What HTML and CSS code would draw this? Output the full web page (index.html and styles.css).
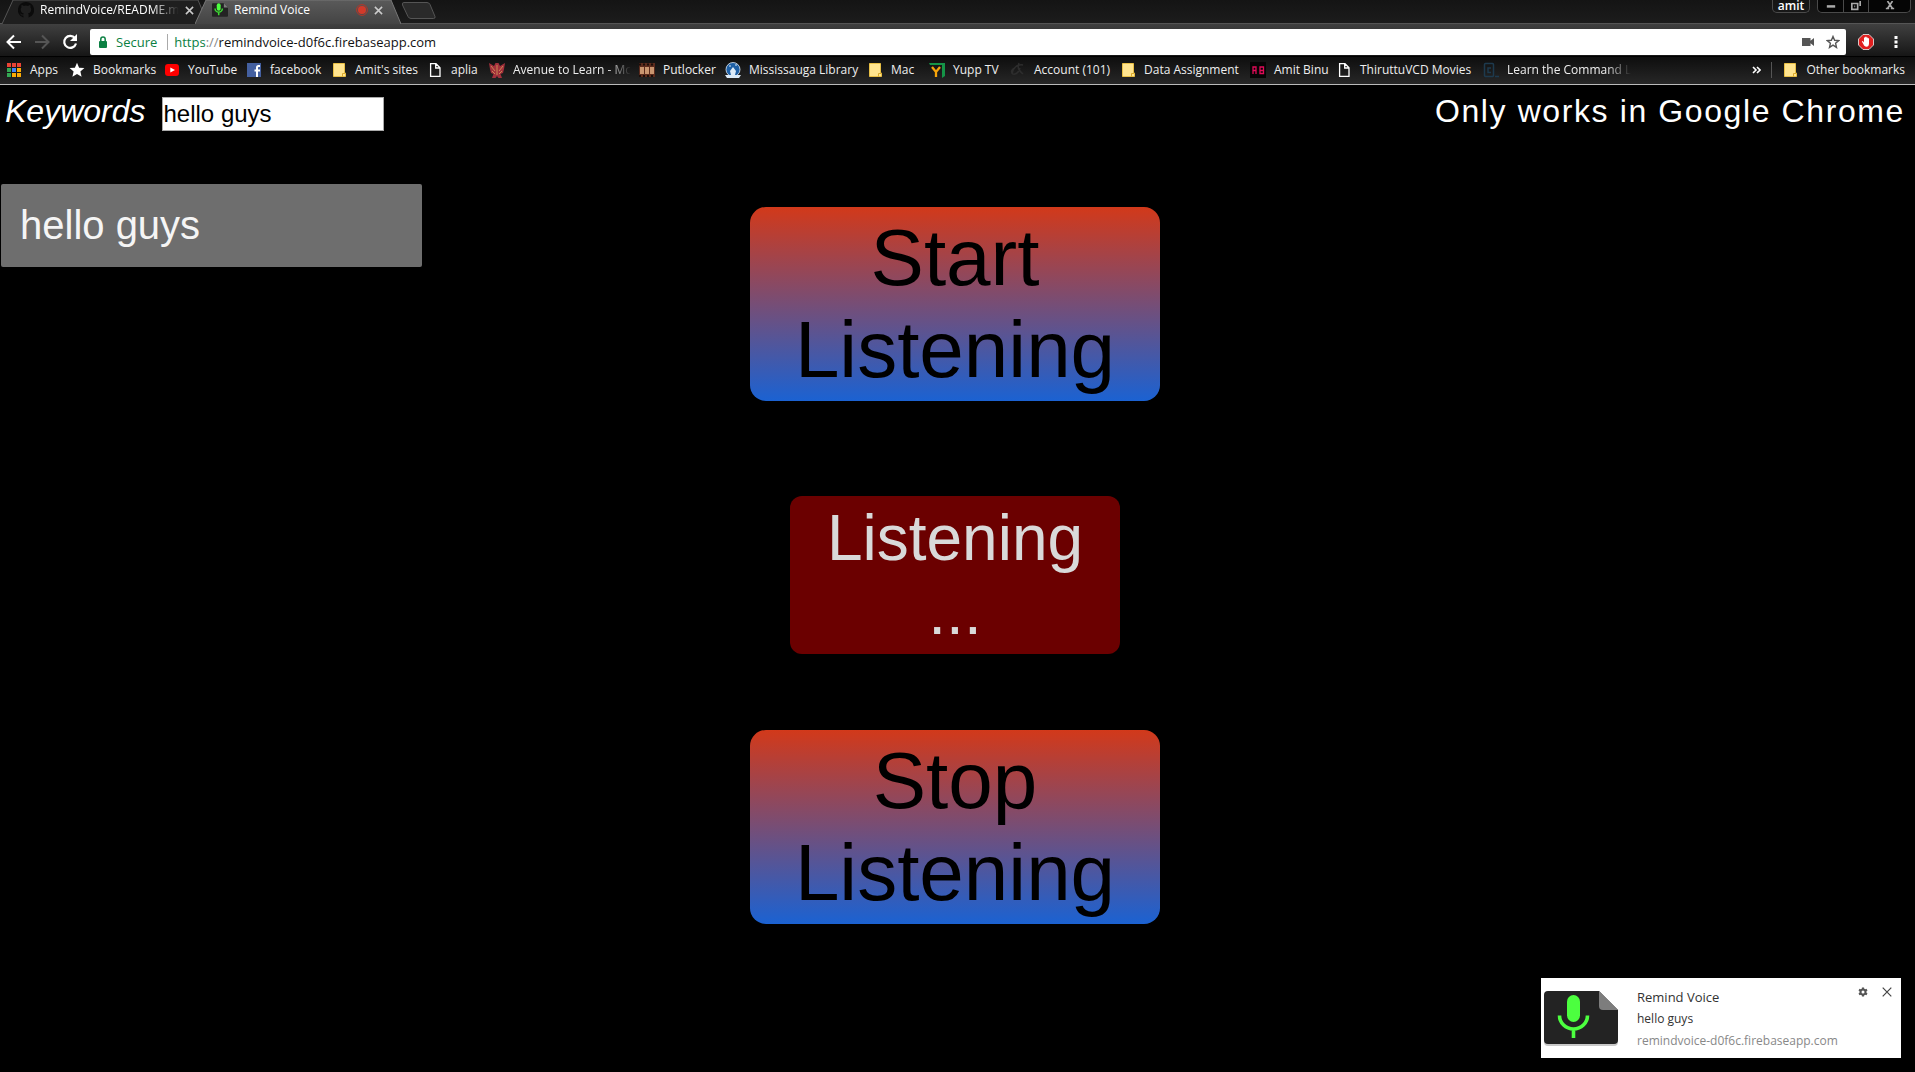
FILE: index.html
```html
<!DOCTYPE html>
<html lang="en">
<head>
<meta charset="utf-8">
<title>Remind Voice</title>
<link rel="stylesheet" href="styles.css">
</head>
<body>
<svg class="defs" aria-hidden="true">
  <symbol id="folder" viewBox="0 0 16 16"><path fill="#ffe48f" stroke="#e8bf45" d="M2.500 1.500h11v9.500h1v3.500h-12z"/><path fill="none" stroke="#d9a92c" d="M11.500 14.500v-3h3"/></symbol>
  <symbol id="file" viewBox="0 0 16 16"><path fill="none" stroke="#fff" stroke-width="1.300" d="M3.600 1.700h5.400l4 4v8.700H3.600zM8.700 1.700v4.300h4.300"/></symbol>
  <symbol id="cross" viewBox="0 0 10 10"><path fill="none" stroke="currentColor" stroke-width="1.700" d="M1 1l8 8M9 1L1 9"/></symbol>
  <symbol id="mic" viewBox="0 0 74 58">
    <path fill="#c8c8c8" d="M2 7h52l20 20v25a4 4 0 0 1-4 4H4a4 4 0 0 1-4-4V7z"/>
    <path fill="#232323" d="M4 1h51l19 19v30a4 4 0 0 1-4 4H4a4 4 0 0 1-4-4V5a4 4 0 0 1 4-4z"/>
    <path fill="#7d7d7d" d="M55 1l19 19H59a4 4 0 0 1-4-4z"/>
    <rect x="23" y="5" width="13" height="27" rx="6.500" fill="#4cff3f"/>
    <path fill="none" stroke="#4cff3f" stroke-width="3.600" d="M15.500 25.500a14 13.500 0 0 0 28 0M29.500 39v9"/>
  </symbol>
</svg>

<header class="browser">
  <div class="tabs">
    <div class="tab">
      <svg class="tab-shape" viewBox="0 0 206 24" preserveAspectRatio="none"><path fill="#1f1f1f" stroke="#555" d="M0 24L11 0H196L206 24"/></svg>
      <svg class="favicon" viewBox="0 0 16 16"><path fill="#0b0b0b" d="M8 0a8 8 0 0 0-2.600 15.600v-2.200c-2.200.5-2.700-1-3.400-2 1.200-.2 1.300 1.500 3.400 1 .1-.6.300-.9.500-1C3.900 11 2.700 10 2.700 7.300c0-.9.300-1.600.8-2.100-.2-.7-.2-1.500.1-2.200.9 0 1.600.5 2.200.9a8 8 0 0 1 4.300 0c.6-.4 1.400-.9 2.200-.9.300.8.300 1.500.1 2.200.5.600.8 1.300.8 2.100 0 2.800-1.300 3.700-3.200 4 .4.400.6.900.6 1.700v2.600A8 8 0 0 0 8 0z"/></svg>
      <span class="tab-title fade">RemindVoice/README.m</span>
      <button class="tab-close" aria-label="Close tab"><svg viewBox="0 0 10 10"><use href="#cross"/></svg></button>
    </div>
    <div class="tab active">
      <svg class="tab-shape" viewBox="0 0 206 24" preserveAspectRatio="none"><path fill="url(#tabfill)" stroke="#777" d="M0 24L11 0H196L206 24"/><defs><linearGradient id="tabfill" x2="0" y2="1"><stop stop-color="#5a5a5a"/><stop offset="1" stop-color="#444"/></linearGradient></defs></svg>
      <svg class="favicon" viewBox="0 0 74 74"><path fill="#232323" d="M4 6h51l19 19v39a4 4 0 0 1-4 4H4a4 4 0 0 1-4-4V10a4 4 0 0 1 4-4z"/><path fill="#7d7d7d" d="M55 6l19 19H55z"/><rect x="22" y="6" width="18" height="34" rx="9" fill="#4cff3f"/><path fill="none" stroke="#3ddc32" stroke-width="7" d="M14 30a17 17 0 0 0 34 0M31 47v14"/></svg>
      <span class="tab-title">Remind Voice</span>
      <svg class="record" viewBox="0 0 12 12"><circle cx="6" cy="6" r="5.400" fill="none" stroke="#b53528" stroke-width="1"/><circle cx="6" cy="6" r="4" fill="#d23a2a"/></svg>
      <button class="tab-close" aria-label="Close tab"><svg viewBox="0 0 10 10"><use href="#cross"/></svg></button>
    </div>
    <button class="new-tab" aria-label="New tab"><svg viewBox="0 0 36 18"><path fill="#2a2a2a" stroke="#555" d="M3 1.500h23q2 0 3 2l5 12q.5 2-1.500 2H10q-2 0-3-2L1.500 4q-.8-2.500 1.500-2.500z"/></svg></button>
    <button class="profile">amit</button>
    <div class="window-buttons">
      <button aria-label="Minimize"><svg viewBox="0 0 12 12"><path fill="#aaa" d="M1 5h10v3H1z"/></svg></button>
      <button aria-label="Restore"><svg viewBox="0 0 12 12"><path fill="none" stroke="#aaa" stroke-width="2" d="M1 3h7v7H1zM4 6.500h1M11 0v6"/></svg></button>
      <button aria-label="Close"><svg viewBox="0 0 12 12"><path fill="none" stroke="#aaa" stroke-width="2" d="M3 0l6 9M9 0L3 9M1 9h4M7 9h4"/></svg></button>
    </div>
  </div>

  <div class="toolbar">
    <button aria-label="Back"><svg viewBox="0 0 16 16"><path fill="none" stroke="#fff" stroke-width="2" d="M15 8H2M8 1.500L1.500 8 8 14.500"/></svg></button>
    <button aria-label="Forward"><svg viewBox="0 0 16 16"><path fill="none" stroke="#555" stroke-width="2" d="M1 8h13M8 1.500L14.500 8 8 14.500"/></svg></button>
    <button aria-label="Reload"><svg viewBox="0 0 16 16"><path fill="none" stroke="#fff" stroke-width="2.200" d="M13 4.200A6 6 0 1 0 14 9.500"/><path fill="#fff" d="M15 0v7H8z"/></svg></button>
    <div class="omnibox">
      <svg class="lock" viewBox="0 0 10 12"><rect x="1" y="5" width="8" height="7" rx="1" fill="#0b8043"/><path fill="none" stroke="#0b8043" stroke-width="1.500" d="M2.800 5V3.200a2.200 2.200 0 0 1 4.400 0V5"/></svg>
      <span class="secure">Secure</span>
      <span class="url"><span class="scheme">https</span><span class="slashes">://</span>remindvoice-d0f6c.firebaseapp.com</span>
      <svg class="camera" viewBox="0 0 14 10"><path fill="#555" d="M1 1h8.500v2.800L13 1v8L9.500 6.200V9H1z"/></svg>
      <button class="star" aria-label="Bookmark this page"><svg viewBox="0 0 14 14"><path fill="none" stroke="#555" stroke-width="1.400" d="M7 1.500l1.600 3.800 4.100.3-3.100 2.700.9 4.100L7 10.200l-3.500 2.200.9-4.100L1.300 5.600l4.100-.3z"/></svg></button>
    </div>
    <button aria-label="Ad blocker"><svg viewBox="0 0 16 16"><path fill="#e01f1f" stroke="#eee" stroke-width=".8" d="M5 .5h6L15.500 5v6L11 15.500H5L.5 11V5z"/><path fill="#fff" d="M5.300 10L3.800 7.500l1-.4L6 8.500V3.600h1.200V2.800h1.300v.7h1.200v.8H11v5.200c0 2-1 3.300-2.500 3.300S6 11.800 5.300 10z"/></svg></button>
    <button class="menu" aria-label="Menu"><svg viewBox="0 0 4 14"><path fill="#fff" d="M.5 1h3v3h-3zM.5 5.500h3v3h-3zM.5 10h3v3h-3z"/></svg></button>
  </div>

  <nav class="bookmarks">
    <a href="#"><svg viewBox="0 0 16 16"><path fill="#ea4335" d="M1 1h4v4H1zM6 1h4v4H6zM11 1h4v4h-4z"/><path fill="#34a853" d="M1 6h4v4H1z"/><path fill="#4285f4" d="M6 6h4v4H6z"/><path fill="#fbab05" d="M11 6h4v4h-4zM6 11h4v4H6zM11 11h4v4h-4z"/><path fill="#34a853" d="M1 11h4v4H1z"/><path stroke="#181818" d="M5.500 0v16M10.500 0v16M0 5.500h16M0 10.500h16"/></svg><span>Apps</span></a>
    <a href="#"><svg viewBox="0 0 16 16"><path fill="#fff" d="M8 .8l2.100 4.900 5.300.4-4 3.500 1.200 5.200L8 12l-4.600 2.800 1.200-5.200-4-3.500 5.300-.4z"/></svg><span>Bookmarks</span></a>
    <a href="#"><svg viewBox="0 0 16 16"><rect x="1" y="2" width="14" height="12" rx="3" fill="#f00"/><path fill="#fff" d="M6.300 5.500L11 8l-4.700 2.500z"/></svg><span>YouTube</span></a>
    <a href="#"><svg viewBox="0 0 16 16"><path fill="#4460a0" d="M1 1h14v14H1z"/><path fill="none" stroke="#fff" stroke-width="2" d="M14 4h-1.500Q11 4 11 5.500V15M8.500 8.500H14"/></svg><span>facebook</span></a>
    <a href="#"><svg viewBox="0 0 16 16"><use href="#folder"/></svg><span>Amit's sites</span></a>
    <a href="#"><svg viewBox="0 0 16 16"><use href="#file"/></svg><span>aplia</span></a>
    <a href="#"><svg viewBox="0 0 16 16"><path fill="#a3303c" d="M0 1l5 3 1.500-3h3L11 4l5-3-1 6-1 4-2.500 1L13 16H9.500L8 14l-1.500 2H3l1.500-4L2 11 1 7z"/><path fill="none" stroke="#c98a52" d="M2 4l4 5M14 4l-4 5M8 3v10M3 9l3 3M13 9l-3 3"/></svg><span class="fade">Avenue to Learn - Mc</span></a>
    <a href="#"><svg viewBox="0 0 16 16"><path fill="#5b2a1c" d="M0 1h16v14H0z"/><path fill="#c9956f" d="M1 5h14v7H1z"/><path stroke="#5b2a1c" d="M5.500 1v11M10.500 1v11"/><path stroke="#1b0d08" stroke-width="2" stroke-dasharray="2 2" d="M0 14h16M0 2.500h16"/></svg><span>Putlocker</span></a>
    <a href="#"><svg viewBox="0 0 16 16"><circle cx="8" cy="7.500" r="7" fill="#1d5fa5" stroke="#dde9f5" stroke-width=".8"/><path fill="#dceaf7" d="M8 5l3 4-1 4H6L5 9zM0 13h16l-2 3H2zM4 4l1-1 1 1-1 1zM10 3l1-1 1 1-1 1z"/></svg><span>Mississauga Library</span></a>
    <a href="#"><svg viewBox="0 0 16 16"><use href="#folder"/></svg><span>Mac</span></a>
    <a href="#"><svg viewBox="0 0 16 16"><path fill="#159447" d="M0 1h16v13l-3 2V3H1z"/><path fill="none" stroke="#f5a30a" stroke-width="2.300" d="M3 5l4 5 4-5M7 9.500V15"/></svg><span>Yupp TV</span></a>
    <a href="#"><svg viewBox="0 0 16 16"><path fill="none" stroke="#2d2d2d" stroke-width="1.500" d="M2 12C3 5 8 2 13 3M9 1c-2 4 0 8 4 11M5 6c-5 2-4 7 0 6s4-4 5-6"/></svg><span>Account (101)</span></a>
    <a href="#"><svg viewBox="0 0 16 16"><use href="#folder"/></svg><span>Data Assignment</span></a>
    <a href="#"><svg viewBox="0 0 16 16"><path fill="#050505" d="M0 0h16v16H0z"/><path fill="none" stroke="#e00b58" stroke-width="1.300" d="M3 12V5h3v7M3 8.500h3M10 5h3.500v6.500H10zM10 8.500h3"/></svg><span>Amit Binu</span></a>
    <a href="#"><svg viewBox="0 0 16 16"><use href="#file"/></svg><span>ThiruttuVCD Movies</span></a>
    <a href="#"><svg viewBox="0 0 16 16"><rect x="1.500" y="1.500" width="9" height="13" rx="1" fill="none" stroke="#1d3a4e" stroke-width="1.500"/><path fill="none" stroke="#1d3a4e" stroke-width="1.500" d="M8 6H5v4.500h3M12 14.500h4"/></svg><span class="fade">Learn the Command L</span></a>
    <button class="more" aria-label="More bookmarks"><svg viewBox="0 0 9 8"><path fill="none" stroke="#fff" stroke-width="1.600" d="M1 1l3 3-3 3M5 1l3 3-3 3"/></svg></button>
    <a class="other" href="#"><svg viewBox="0 0 16 16"><use href="#folder"/></svg><span>Other bookmarks</span></a>
  </nav>
</header>

<main>
  <div class="heading">
    <label for="keywords">Keywords</label>
    <input id="keywords" type="text" value="hello guys">
    <p>Only works in Google Chrome</p>
  </div>
  <div class="content">
    <ul class="keyword-list"><li>hello guys</li></ul>
    <div class="controls">
      <button class="action">Start Listening</button>
      <div class="status" role="status">Listening ...</div>
      <button class="action">Stop Listening</button>
    </div>
  </div>
</main>

<aside class="notification">
  <svg class="app-icon" viewBox="0 0 74 58"><use href="#mic"/></svg>
  <div class="message">
    <h2>Remind Voice</h2>
    <p>hello guys</p>
    <p class="origin">remindvoice-d0f6c.firebaseapp.com</p>
  </div>
  <button aria-label="Settings"><svg viewBox="0 0 12 12"><circle cx="6" cy="6" r="3" fill="none" stroke="#555" stroke-width="2.400"/><path stroke="#555" stroke-width="2.600" d="M6 .5v2M6 9.500v2M1.200 3.200l1.800 1M9 7.800l1.800 1M1.200 8.800l1.800-1M9 4.200l1.800-1"/></svg></button>
  <button aria-label="Dismiss"><svg viewBox="0 0 10 10"><path fill="none" stroke="#444" stroke-width="1.200" d="M.7.700l8.600 8.600M9.300.700L.7 9.300"/></svg></button>
</aside>
</body>
</html>
```
FILE: styles.css
```css
* { box-sizing: border-box; }

body {
  margin: 0;
  min-height: 100vh;
  background: #000;
  color: #fff;
  font-family: "Liberation Sans", Arial, sans-serif;
}

button {
  margin: 0;
  padding: 0;
  border: 0;
  background: none;
  color: inherit;
  font: inherit;
}

svg { display: block; flex: none; }
p, h2, ul { margin: 0; padding: 0; }
.defs { position: absolute; width: 0; height: 0; }

/* Browser frame */
.browser { font: 12px/16px "Open Sans", "Noto Sans", sans-serif; }

.tabs {
  display: flex;
  align-items: flex-start;
  height: 24px;
  padding: 0 4px 0 2px;
  background: linear-gradient(#141414, #1c1c1c);
  border-bottom: 1px solid #555;
}

.tab {
  position: relative;
  display: flex;
  align-items: center;
  gap: 6px;
  width: 206px;
  height: 24px;
  padding: 0 18px 4px 16px;
}
.tab.active { margin-left: -13px; padding-left: 17px; }
.tab-shape { position: absolute; inset: 0; width: 100%; height: 100%; }
.tab > :not(.tab-shape) { position: relative; }
.favicon { width: 16px; height: 16px; }
.tab-title { flex: 1; white-space: nowrap; }
.tab-close svg { width: 9px; height: 9px; color: #ccc; }
.record { width: 12px; height: 12px; }
.new-tab svg { width: 36px; height: 20px; }

.profile {
  width: 38px;
  height: 13px;
  margin-left: auto;
  border: 1px solid #4a4a4a;
  border-top: 0;
  border-radius: 0 0 5px 5px;
  font-weight: 600;
  line-height: 8px;
}
.window-buttons {
  display: flex;
  height: 13px;
  margin-left: 7px;
  border: 1px solid #4a4a4a;
  border-top: 0;
  border-radius: 0 0 5px 5px;
  background: #050505;
}
.window-buttons button { display: grid; place-items: center; width: 25px; }
.window-buttons button + button { border-left: 1px solid #4a4a4a; }
.window-buttons button:last-child { width: 42px; }
.window-buttons svg { width: 10px; height: 10px; }

.toolbar {
  display: flex;
  align-items: center;
  gap: 12px;
  height: 32px;
  padding: 4px 17px 0 6px;
  background: linear-gradient(#404040, #161616);
}
.toolbar > button { width: 16px; }
.toolbar > button svg { width: 16px; height: 16px; }
.toolbar > .menu { width: 4px; margin-left: 8px; }
.toolbar .menu svg { width: 4px; height: 14px; }
.omnibox {
  flex: 1;
  display: flex;
  align-items: center;
  height: 26px;
  padding: 0 6px 0 8px;
  border-radius: 2px;
  background: #fff;
  color: #111;
  font-size: 13px;
}
.lock { width: 10px; height: 12px; }
.secure {
  margin-left: 8px;
  padding-right: 10px;
  border-right: 1px solid #aaa;
  color: #0b8043;
}
.url { flex: 1; margin-left: 6px; }
.scheme { color: #0b8043; }
.slashes { color: #888; }
.camera { width: 14px; height: 10px; }
.star { margin-left: 11px; }
.star svg { width: 14px; height: 14px; }

.bookmarks {
  display: grid;
  grid-template-columns: 63px 95px 82px 85px 96px 62px 150px 86px 142px 62px 81px 110px 130px 86px 147px 150px 1fr auto;
  align-items: center;
  height: 29px;
  padding: 0 10px 2px 6px;
  border-top: 1px solid #000;
  border-bottom: 1px solid #bbb;
  background: linear-gradient(#0e0e0e, #272727);
}
.bookmarks a {
  display: flex;
  align-items: center;
  gap: 8px;
  color: #eee;
  text-decoration: none;
  white-space: nowrap;
}
.bookmarks a svg { width: 16px; height: 16px; }
.fade {
  -webkit-mask-image: linear-gradient(90deg, #000 80%, transparent);
  mask-image: linear-gradient(90deg, #000 80%, transparent);
}
.more { justify-self: end; padding-right: 10px; }
.more svg { width: 9px; height: 8px; }
.bookmarks .other { padding-left: 10px; border-left: 1px solid #555; }

/* Page */
.heading {
  display: flex;
  align-items: flex-start;
  padding: 8px 10px 0 5px;
  font-size: 32px;
  line-height: 37px;
}
.heading label { font-style: italic; }
.heading input {
  width: 222px;
  height: 34px;
  margin: 4px 0 0 16px;
  padding: 1px;
  border: 1px solid #aaa;
  border-radius: 0;
  background: #fff;
  color: #000;
  font: 24px "Liberation Sans", Arial, sans-serif;
}
.heading p { margin-left: auto; letter-spacing: 0.05em; }

.content {
  display: grid;
  grid-template-columns: 22% 1fr 22%;
  padding: 53px 0 0 1px;
}
.keyword-list { list-style: none; }
.keyword-list li {
  padding: 18px 19px;
  border-radius: 2px;
  background: #6e6e6e;
  color: #f5f5f5;
  font-size: 40px;
  line-height: 47px;
}
.controls {
  display: flex;
  flex-direction: column;
  align-items: center;
  padding: 23px 6px 0 0;
  text-align: center;
}
.action {
  width: 410px;
  padding: 5px 20px;
  border-radius: 16px;
  background: linear-gradient(#d2391a, #1b62d2);
  color: #000;
  font-size: 80px;
  line-height: 92px;
}
.status {
  width: 330px;
  margin: 95px 0 76px;
  padding: 5px 32px;
  border-radius: 12px;
  background: #6b0000;
  color: #d9d9d9;
  font-size: 64px;
  line-height: 74px;
}

/* Desktop notification */
.notification {
  position: fixed;
  right: 14px;
  bottom: 14px;
  display: flex;
  align-items: flex-start;
  width: 360px;
  height: 80px;
  padding: 8px 9px 0 3px;
  background: #fff;
  color: #333;
  font: 12px/22px "Open Sans", "Noto Sans", sans-serif;
}
.app-icon { width: 74px; height: 58px; margin-top: 4px; }
.message { flex: 1; margin-left: 19px; }
.message h2 { font-size: 13px; font-weight: 400; }
.message .origin { color: #888; }
.notification button { margin: 1px 0 0 14px; }
.notification button svg { width: 10px; height: 10px; }
```
